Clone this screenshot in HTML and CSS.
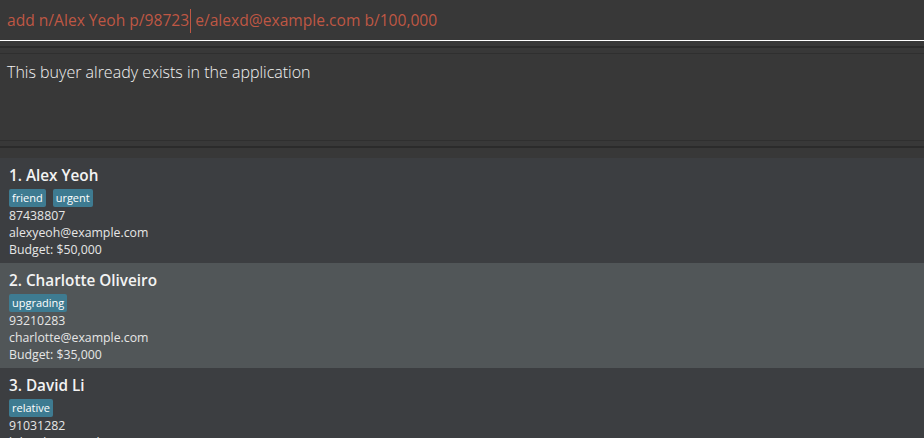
FILE: index.html
```html
<!DOCTYPE html>
<html>
<head>
<meta charset="utf-8">
<title>Buyers</title>
<link rel="stylesheet" href="styles.css">
</head>
<body>
<div class="app">
  <div class="command">
    <span class="command-text">add n/Alex Yeoh p/98723<span class="caret"></span> e/alexd@example.com b/100,000</span>
  </div>
  <div class="divider"></div>
  <div class="result">This buyer already exists in the application</div>
  <div class="divider divider-bottom"></div>
  <ul class="list">
    <li class="card">
      <div class="name">1. Alex Yeoh</div>
      <div class="tags"><span class="tag">friend</span><span class="tag">urgent</span></div>
      <div class="field">87438807</div>
      <div class="field">alexyeoh@example.com</div>
      <div class="field">Budget: $50,000</div>
    </li>
    <li class="card card-odd">
      <div class="name">2. Charlotte Oliveiro</div>
      <div class="tags"><span class="tag">upgrading</span></div>
      <div class="field">93210283</div>
      <div class="field">charlotte@example.com</div>
      <div class="field">Budget: $35,000</div>
    </li>
    <li class="card">
      <div class="name">3. David Li</div>
      <div class="tags"><span class="tag">relative</span></div>
      <div class="field">91031282</div>
      <div class="field">lidavid@example.com</div>
      <div class="field">Budget: $20,000</div>
    </li>
  </ul>
</div>
</body>
</html>
```
FILE: styles.css
```css
html, body {
  margin: 0;
  padding: 0;
  height: 100%;
  overflow: hidden;
  background: #383838;
  font-family: "Open Sans", "Noto Sans", sans-serif;
}
.app {
  display: flex;
  flex-direction: column;
}
.command {
  border-bottom: 1px solid #ffffff;
  padding-left: 7px;
  display: flex;
  align-items: center;
  box-sizing: border-box;
  height: 41px;
}
.command-text {
  font-size: 15.6px;
  color: #bf5744;
  white-space: nowrap;
  line-height: 24px;
  padding-top: 1px;
}
.caret {
  display: inline-block;
  width: 0;
  height: 24px;
  border-left: 1px solid #bf5744;
  vertical-align: middle;
  margin: 0 0 0 1px;
}
.divider {
  height: 13px;
  box-sizing: border-box;
  padding-top: 5px;
  display: flex;
  flex-direction: column;
}
.divider::before {
  content: "";
  height: 2px;
  background: #2b2b2b;
}
.divider::after {
  content: "";
  height: 1px;
  margin-top: 5px;
  background: #2f2f2f;
}
.result {
  height: 86px;
  padding: 7px 7px 0;
  box-sizing: border-box;
  color: #f2f2f2;
  font-weight: 300;
  font-size: 16px;
  line-height: 22px;
}
.divider-bottom {
  height: 18px;
  padding-top: 0;
}
.divider-bottom::before {
  height: 1px;
  background: #2f2f2f;
}
.divider-bottom::after {
  height: 2px;
  background: #2b2b2b;
}
.list {
  list-style: none;
  margin: 0;
  padding: 0;
  display: flex;
  flex-direction: column;
}
.card {
  height: 105px;
  box-sizing: border-box;
  padding: 6px 8px 5px 9px;
  background: #3c3e41;
  color: #f0f0f0;
  display: flex;
  flex-direction: column;
}
.card-odd {
  background: #515658;
}
.name {
  font-size: 15.3px;
  font-weight: 600;
  line-height: 22px;
  color: #f3f3f3;
}
.tags {
  display: flex;
  gap: 7px;
  margin-top: 3px;
}
.tag {
  background: #3e7b91;
  color: #ffffff;
  font-size: 11px;
  line-height: 16px;
  padding: 1px 3px;
  border-radius: 2px;
}
.field {
  font-size: 12.3px;
  line-height: 17px;
  color: #e6e6e6;
}
```
